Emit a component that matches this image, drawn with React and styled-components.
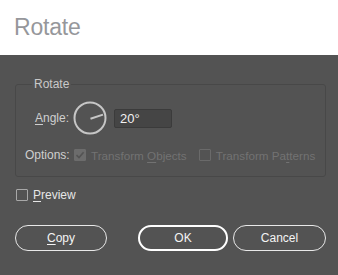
import React from "react";
import styled, { createGlobalStyle } from "styled-components";

const Global = createGlobalStyle`
  html, body { margin: 0; padding: 0; background: #535353; }
  body { font-family: "Liberation Sans", Arial, sans-serif; }
`;

const Dialog = styled.div`
  width: 338px;
  height: 275px;
  background: #535353;
  display: flex;
  flex-direction: column;
  overflow: hidden;
`;

const TitleBar = styled.div`
  height: 55px;
  background: #ffffff;
  display: flex;
  align-items: center;
  padding: 0 0 1px 14px;
  box-sizing: border-box;
`;

const Title = styled.h1`
  margin: 0;
  font-weight: 400;
  font-size: 23px;
  letter-spacing: -0.2px;
  color: #96979b;
`;

const Body = styled.div`
  display: flex;
  flex-direction: column;
  padding: 22px 12px 0 15px;
`;

const Group = styled.fieldset`
  margin: 0;
  border: 1px solid #484848;
  border-radius: 3px;
  padding: 10px 0 13px 9px;
  display: flex;
  flex-direction: column;
  gap: 12px;
`;

const Legend = styled.legend`
  font-size: 12px;
  line-height: 14px;
  color: #c9c9c9;
  padding: 0 2px;
  margin-left: 7px;
`;

const Row = styled.div`
  display: flex;
  align-items: center;
  height: ${(p) => p.h}px;
`;

const Label = styled.span`
  width: 44px;
  text-align: right;
  font-size: 12px;
  color: #cfcfcf;
  margin-right: ${(p) => p.mr}px;
`;

const U = styled.span`
  text-decoration: underline;
  text-underline-offset: 2px;
`;

const Dial = styled.svg`
  width: 34px;
  height: 34px;
  display: block;
  margin-right: 7px;
`;

const Input = styled.input`
  width: 58px;
  height: 19px;
  box-sizing: border-box;
  background: #454545;
  border: 1px solid #3b3b3b;
  border-radius: 2px;
  color: #f2f2f2;
  font-family: "Liberation Sans", Arial, sans-serif;
  font-size: 13px;
  padding: 0 5px;
  outline: none;
`;

const Check = styled.span`
  flex: none;
  width: 12px;
  height: 12px;
  box-sizing: border-box;
  border: 1px solid ${(p) => (p.checked ? "#6c6c6c" : p.dim ? "#6a6a6a" : "#a8a8a8")};
  background: ${(p) => (p.checked ? "#6c6c6c" : "transparent")};
  border-radius: 1px;
  display: flex;
  align-items: center;
  justify-content: center;
  margin-right: 5px;
`;

const Option = styled.label`
  display: flex;
  align-items: center;
  font-size: ${(p) => (p.dim ? 11.7 : 12)}px;
  white-space: nowrap;
  color: ${(p) => (p.dim ? "#727272" : "#e6e6e6")};
  margin-right: ${(p) => p.mr || 0}px;
`;

const PreviewRow = styled.div`
  display: flex;
  align-items: center;
  margin: 12px 0 0 1px;
  height: 12px;
`;

const Buttons = styled.div`
  display: flex;
  margin-top: 24px;
  gap: 5px;
`;

const Button = styled.button`
  width: ${(p) => p.w}px;
  height: 26px;
  box-sizing: border-box;
  border-radius: 13px;
  background: transparent;
  border: ${(p) => (p.primary ? "2px solid #ffffff" : "1.5px solid #e8e8e8")};
  color: #f4f4f4;
  font-family: "Liberation Sans", Arial, sans-serif;
  font-size: 12px;
  margin-right: ${(p) => p.mr || 0}px;
  padding: 0;
`;

const CheckMark = () => (
  <svg width="10" height="10" viewBox="0 0 10 10">
    <path d="M1.5 5.2 L4 7.6 L8.6 2.2" fill="none" stroke="#535353" strokeWidth="1.6" />
  </svg>
);

export default function App() {
  return (
    <Dialog>
      <Global />
      <TitleBar>
        <Title>Rotate</Title>
      </TitleBar>
      <Body>
        <Group>
          <Legend>Rotate</Legend>
          <Row h={34}>
            <Label mr={4}>
              <U>A</U>ngle:
            </Label>
            <Dial viewBox="0 0 34 34">
              <circle cx="17" cy="17" r="15.5" fill="none" stroke="#c6c6c6" strokeWidth="2" />
              <line x1="17.5" y1="17.8" x2="30" y2="13.6" stroke="#c6c6c6" strokeWidth="2" />
            </Dial>
            <Input defaultValue="20°" />
          </Row>
          <Row h={16}>
            <Label mr={5}>Options:</Label>
            <Option dim mr={12}>
              <Check checked>
                <CheckMark />
              </Check>
              <span>
                Transform <U>O</U>bjects
              </span>
            </Option>
            <Option dim>
              <Check dim />
              <span>
                Transform Pa<U>t</U>terns
              </span>
            </Option>
          </Row>
        </Group>
        <PreviewRow>
          <Option>
            <Check />
            <span>
              <U>P</U>review
            </span>
          </Option>
        </PreviewRow>
        <Buttons>
          <Button w={92} mr={26}>
            <U>C</U>opy
          </Button>
          <Button w={90} primary>
            OK
          </Button>
          <Button w={93}>Cancel</Button>
        </Buttons>
      </Body>
    </Dialog>
  );
}
